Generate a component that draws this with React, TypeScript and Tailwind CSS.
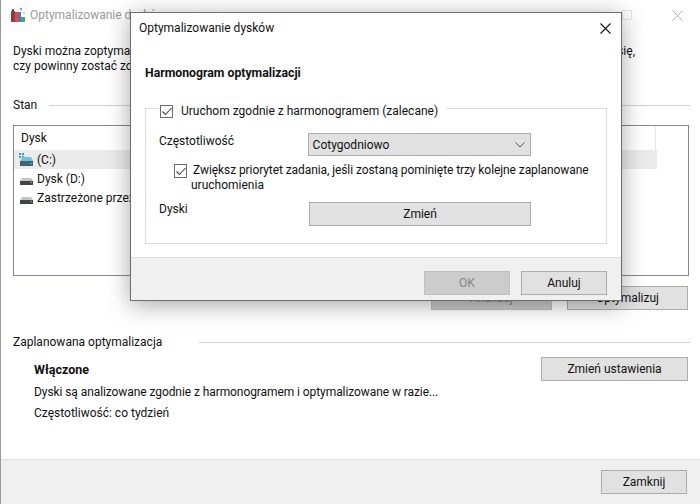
const btnBase = "flex items-center justify-center h-6 border text-[12px] leading-none";
const btn = `${btnBase} bg-[#e1e1e1] border-[#adadad] text-[#111]`;
const btnOff = `${btnBase} bg-[#cccccc] border-[#bfbfbf] text-[#858585]`;

function AppIcon() {
  return (
    <svg width="16" height="16" viewBox="0 0 16 16" className="shrink-0">
      <rect x="1" y="4" width="4" height="11" fill="#a8323a" />
      <rect x="5" y="5" width="3" height="10" fill="#c9564a" />
      <rect x="8" y="9" width="3" height="6" fill="#3f7fc9" />
      <rect x="11" y="10" width="4" height="5" fill="#5a9f5a" />
      <rect x="8" y="5" width="3" height="4" fill="#5c6fb8" />
      <rect x="2" y="2" width="2" height="2" fill="#7a3b52" />
      <rect x="10" y="1" width="2" height="2" fill="#d070c8" />
      <rect x="13" y="5" width="2" height="2" fill="#b8d0ea" />
    </svg>
  );
}

function DriveIcon({ win }: { win?: boolean }) {
  return (
    <svg width="16" height="16" viewBox="0 0 16 16" className="shrink-0">
      {win && (
        <g fill="#2a9fe0">
          <rect x="1" y="1" width="2" height="2" />
          <rect x="4" y="1" width="2" height="2" />
          <rect x="1" y="4" width="2" height="2" />
          <rect x="4" y="4" width="2" height="2" />
        </g>
      )}
      <path d={win ? "M3 8 L4 5 H13 L15 9 H2 Z" : "M3 9 L4 7 H13 L15 10 H2 Z"} fill={win ? "#6cc0ea" : "#c4c4c4"} />
      <rect x="2" y={win ? 9 : 10} width="13" height={win ? 5 : 4} fill={win ? "#47606e" : "#404446"} />
      <rect x="12.5" y="11" width="1.5" height="1" fill="#6fd05a" />
    </svg>
  );
}

function Check({ size }: { size: string }) {
  return (
    <span className={`${size} shrink-0 flex items-center justify-center bg-white border border-[#6a6a6a]`}>
      <svg width="10" height="9" viewBox="0 0 10 9" fill="none" stroke="#444" strokeWidth="1.1">
        <path d="M0.5 4.5 L3.5 7.5 L9.5 1" />
      </svg>
    </span>
  );
}

export default function App() {
  return (
    <div
      className="relative w-[700px] h-[504px] overflow-hidden bg-white text-[12px] text-[#111]"
      style={{ fontFamily: 'Roboto, "Noto Sans", sans-serif' }}
    >
      {/* Back window */}
      <div className="flex flex-col w-[700px] h-[504px] border-l border-[#9a9a9a]">
        <div className="flex items-center h-[30px] pl-[9px] pr-[17px] shrink-0">
          <AppIcon />
          <span className="ml-[4px] text-[#9a9a9a]">Optymalizowanie dysków</span>
          <span className="ml-auto w-[10px] h-[10px] border border-[#e4e4e4]" />
          <svg width="11" height="11" viewBox="0 0 11 11" className="ml-[40px]" stroke="#b5b5b5" fill="none">
            <path d="M0.5 0.5 L10.5 10.5 M10.5 0.5 L0.5 10.5" />
          </svg>
        </div>
        <div className="pl-[12px] pr-[10px] mt-[14px] flex flex-col">
          <p className="leading-[15px] whitespace-nowrap flex justify-between pr-[55px]">
            <span>Dyski można zoptymalizować</span>
            <span>się,</span>
          </p>
          <p className="leading-[15px]">czy powinny zostać zoptymalizowane.</p>
          <div className="flex items-center h-[16px] mt-[23px] gap-3">
            <span>Stan</span>
            <span className="flex-1 h-px bg-[#d2d2d2]" />
          </div>
          <div className="h-[151px] w-[676px] mt-[12px] border border-[#828790] bg-white flex flex-col">
            <div className="flex h-[24px] items-center shrink-0">
              <span className="w-[642px] pl-[7px] border-r border-[#e5e5e5] h-full flex items-center">Dysk</span>
            </div>
            <div className="flex items-center h-[19px] w-[643px] bg-[#ebebeb] pl-[4px] gap-[3px]">
              <DriveIcon win />
              <span>(C:)</span>
            </div>
            <div className="flex items-center h-[19px] pl-[4px] gap-[3px]">
              <DriveIcon />
              <span>Dysk (D:)</span>
            </div>
            <div className="flex items-center h-[19px] pl-[4px] gap-[3px]">
              <DriveIcon />
              <span>Zastrzeżone przez system</span>
            </div>
          </div>
          <div className="flex justify-end gap-[15px] mt-[10px] pr-[2px]">
            <div className={`${btnOff} w-[121px]`}>Analizuj</div>
            <div className={`${btn} w-[121px]`}>Optymalizuj</div>
          </div>
          <div className="flex items-center h-[18px] mt-[23px]">
            <span className="w-[186px] whitespace-nowrap">Zaplanowana optymalizacja</span>
            <span className="flex-1 h-px bg-[#d2d2d2]" />
          </div>
          <div className="pl-[21px] -mt-[1px] pt-[11px]">
            <p className="font-bold text-[12.5px] leading-[18px]">Włączone</p>
            <p className="leading-[18px] mt-[4px] whitespace-nowrap tracking-[-0.08px]">Dyski są analizowane zgodnie z harmonogramem i optymalizowane w razie...</p>
            <p className="leading-[18px] mt-[3px]">Częstotliwość: co tydzień</p>
          </div>
          <div className={`${btn} w-[147px] absolute right-[12px] top-[357px]`}>Zmień ustawienia</div>
        </div>
        <div className="mt-auto h-[45px] bg-[#f0f0f0] border-t border-[#dfdfdf] flex items-start justify-end pr-[13px] pt-[10px]">
          <div className={`${btn} w-[86px]`}>Zamknij</div>
        </div>
      </div>

      {/* Dialog */}
      <div className="absolute left-[130px] top-[12px] w-[492px] h-[289px] flex flex-col bg-white border border-[#6d6d6d] shadow-[0_4px_22px_rgba(0,0,0,0.35)]">
        <div className="flex items-center justify-between h-[30px] pl-[8px] pr-[10px] shrink-0">
          <span>Optymalizowanie dysków</span>
          <svg width="11" height="11" viewBox="0 0 11 11" stroke="#111" fill="none" strokeWidth="1.1">
            <path d="M0.5 0.5 L10.5 10.5 M10.5 0.5 L0.5 10.5" />
          </svg>
        </div>
        <div className="flex-1 px-[14px] pt-[21px]">
          <h2 className="font-bold text-[12.25px] leading-[18px]">Harmonogram optymalizacji</h2>
          <div className="relative mt-[26px] h-[136px] w-[462px] border border-[#dcdcdc] pl-[13px] pr-[75px] pt-[24px]">
            <div className="absolute left-[13px] -top-[5px] flex items-center gap-[8px] bg-white pr-[8px] pl-px h-[14px]">
              <Check size="w-[13px] h-[13px]" />
              <span className="whitespace-nowrap leading-none">Uruchom zgodnie z harmonogramem (zalecane)</span>
            </div>
            <div className="flex items-start">
              <span className="w-[149px] leading-[18px] -mt-[1px]">Częstotliwość</span>
              <div className="flex items-center justify-between w-[224px] h-[23px] bg-[#e1e1e1] border border-[#adadad] pl-[4px] pr-[5px]">
                <span>Cotygodniowo</span>
                <svg width="10" height="6" viewBox="0 0 10 6" fill="none" stroke="#555">
                  <path d="M0.5 0.5 L5 5 L9.5 0.5" />
                </svg>
              </div>
            </div>
            <div className="relative mt-[7px] pl-[32px] leading-[15px] w-[450px] -mr-[80px] h-[32px]">
              <span className="absolute left-[15px] top-[1px]"><Check size="w-[13px] h-[14px]" /></span>
              <p className="whitespace-nowrap pl-[2px] tracking-[-0.08px]">Zwiększ priorytet zadania, jeśli zostaną pominięte trzy kolejne zaplanowane</p>
              <p>uruchomienia</p>
            </div>
            <div className="flex items-start mt-[7px]">
              <span className="w-[150px] leading-[18px] -mt-[2px]">Dyski</span>
              <div className={`${btn} w-[222px]`}>Zmień</div>
            </div>
          </div>
        </div>
        <div className="h-[43px] shrink-0 bg-[#f0f0f0] border-t border-[#dfdfdf] flex items-start justify-end gap-[11px] pr-[14px] pt-[13px]">
          <div className={`${btnOff} w-[86px]`}>OK</div>
          <div className={`${btn} w-[86px]`}>Anuluj</div>
        </div>
      </div>
    </div>
  );
}
